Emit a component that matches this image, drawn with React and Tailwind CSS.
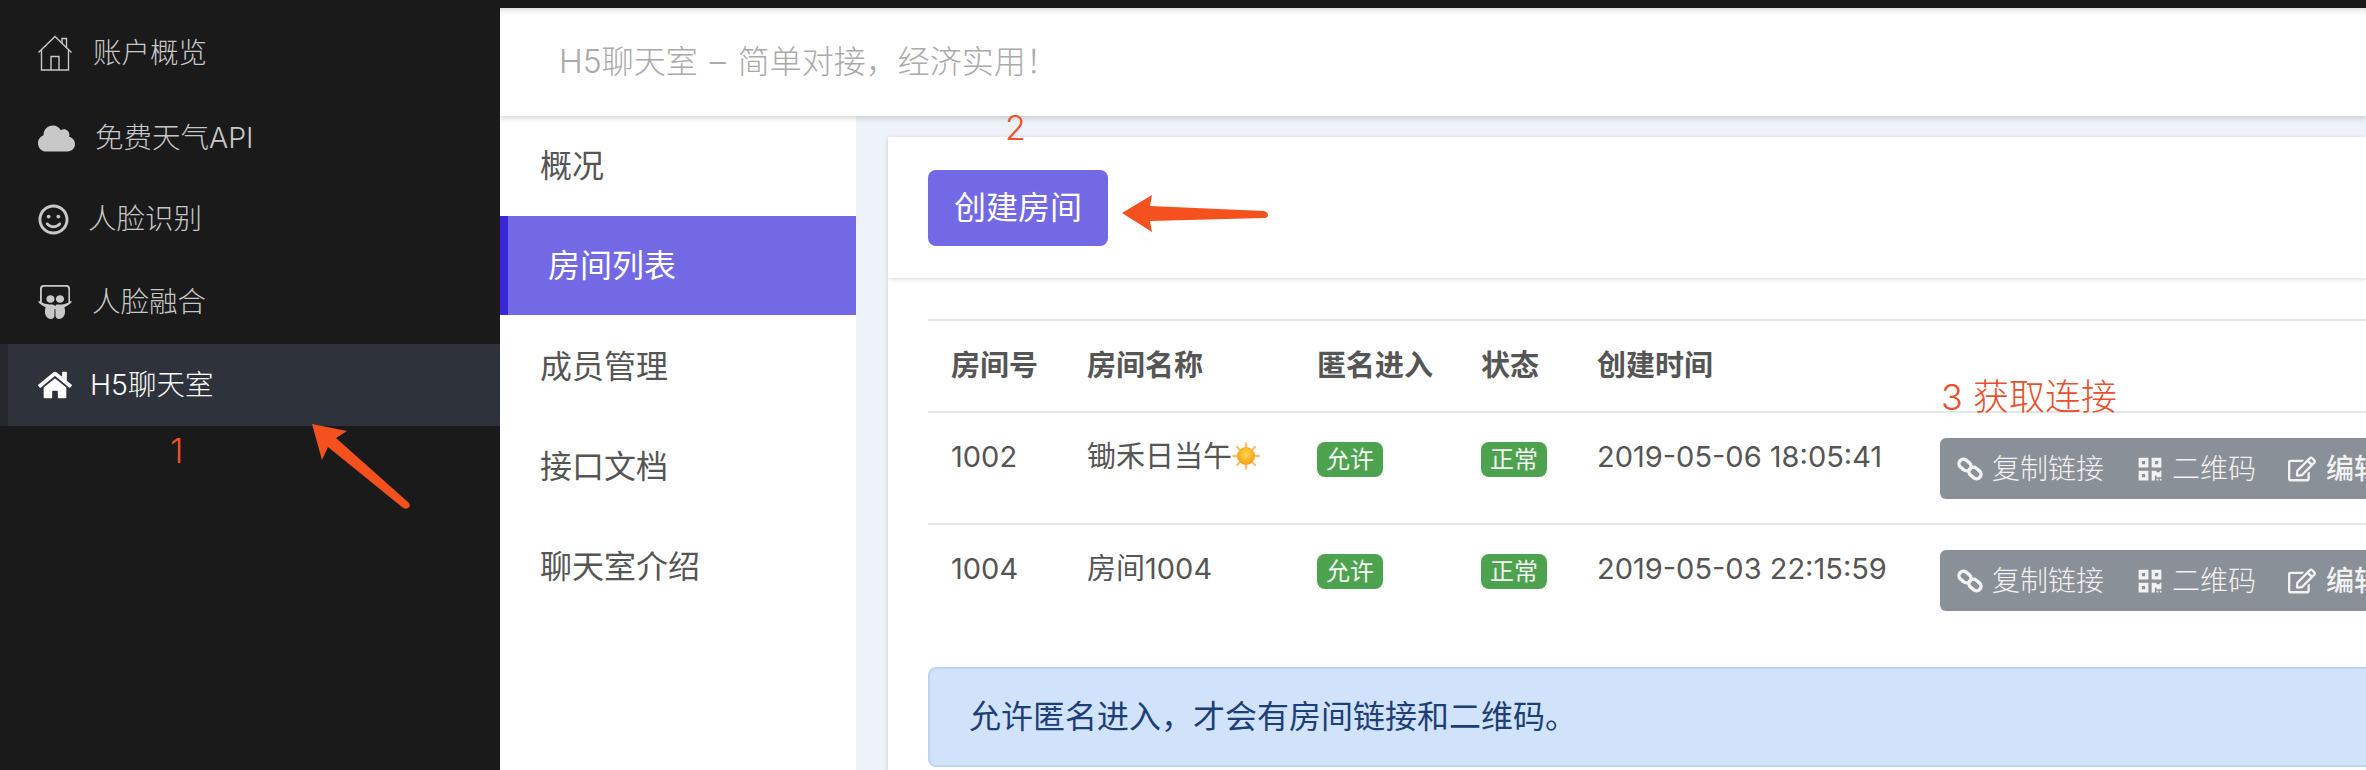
import { FaCloud, FaRegSmile, FaSlideshare, FaHome, FaQrcode, FaRegEdit } from "react-icons/fa";

const fontStack = "font-['Inter','Noto_Sans_CJK_SC',sans-serif]";

function OutlineHouse() {
  return (
    <svg width="34" height="36" viewBox="0 0 34 36" fill="none" stroke="#c8c8c8" strokeWidth="1.4">
      <path d="M0.5 17.5 L17 1.5 L33.5 17.5" />
      <path d="M24 8.5 V3.5 H28.5 V13" />
      <path d="M3.5 15 V35 H30.5 V15" />
      <path d="M13 35 V21.5 H21 V35" />
    </svg>
  );
}

function LinkIcon() {
  return (
    <svg width="26" height="26" viewBox="0 0 26 26" fill="none" stroke="#f2f2f2" strokeWidth="3.4">
      <rect x="1.5" y="4.5" width="13" height="9" rx="4.5" transform="rotate(40 8 9)" />
      <rect x="11.5" y="12.5" width="13" height="9" rx="4.5" transform="rotate(40 18 17)" />
    </svg>
  );
}

function Sun() {
  return (
    <svg width="28" height="28" viewBox="0 0 28 28" className="inline-block align-[-3px]">
      <defs>
        <radialGradient id="sunCore" cx="50%" cy="40%" r="60%">
          <stop offset="0%" stopColor="#ffd84a" />
          <stop offset="100%" stopColor="#f59a12" />
        </radialGradient>
      </defs>
      <g stroke="#f3c07a" strokeWidth="2.4" strokeLinecap="round">
        <path d="M14 1.5V4.5M14 23.5V26.5M1.5 14H4.5M23.5 14H26.5M5 5L7 7M21 21L23 23M5 23L7 21M21 7L23 5" />
      </g>
      <circle cx="14" cy="14" r="9" fill="url(#sunCore)" />
    </svg>
  );
}

function Badge({ children }) {
  return (
    <span className="flex h-[35px] w-[66px] items-center justify-center rounded-lg bg-[#4da24f] text-[24px] leading-none text-[#f4f8f4]">
      {children}
    </span>
  );
}

function ActionBar() {
  return (
    <div className="flex h-[61px] w-[520px] items-center rounded-md bg-[#8a9098] pl-[17px] text-[28px] font-light text-[#f2f2f2]">
      <LinkIcon />
      <span className="ml-[9px]">复制链接</span>
      <FaQrcode className="ml-[33px] text-[26px]" />
      <span className="ml-[9px]">二维码</span>
      <FaRegEdit className="ml-[32px] text-[28px]" />
      <span className="ml-[10px] font-medium">编辑</span>
    </div>
  );
}

const sideItems = [
  { label: "账户概览", icon: <OutlineHouse />, box: "w-[55px]", height: "h-[90px]" },
  { label: "免费天气API", icon: <FaCloud className="text-[37px] text-[#c8c8c8]" />, box: "w-[57px]", height: "h-[81px]" },
  { label: "人脸识别", icon: <FaRegSmile className="text-[31px] text-[#c8c8c8]" />, box: "w-[50px]", height: "h-[81px]" },
  { label: "人脸融合", icon: <FaSlideshare className="text-[34px] text-[#c8c8c8]" />, box: "w-[54px]", height: "h-[84px]" },
];

const subNav = ["概况", "房间列表", "成员管理", "接口文档", "聊天室介绍"];

const rooms = [
  { id: "1002", name: <>锄禾日当午<Sun /></>, time: "2019-05-06 18:05:41" },
  { id: "1004", name: "房间1004", time: "2019-05-03 22:15:59" },
];

export default function App() {
  return (
    <div className={`relative flex h-[770px] w-[2366px] flex-col overflow-hidden bg-[#edf3f8] ${fontStack}`}>
      <div className="relative z-20 h-2 shrink-0 bg-[#1a1a1a]" />
      <div className="flex min-h-0 flex-1">
        {/* left dark menu */}
        <div className="relative z-30 flex w-[500px] shrink-0 flex-col bg-[#1a1a1a] text-[28.5px] font-light text-[#c8c8c8]">
          {sideItems.map((item) => (
            <div key={item.label} className={`flex items-center pl-[38px] ${item.height}`}>
              <div className={`flex items-center ${item.box}`}>{item.icon}</div>
              <span>{item.label}</span>
            </div>
          ))}
          <div className="flex h-[82px] items-center border-l-8 border-[#24272c] bg-[#2e323a] pl-[30px] text-white">
            <div className="flex w-[52px] items-center">
              <FaHome className="text-[34px]" />
            </div>
            <span>H5聊天室</span>
          </div>
        </div>

        <div className="flex min-w-0 flex-1 flex-col">
          <div className="relative z-10 flex h-[108px] shrink-0 items-center bg-white pl-[59px] text-[32px] font-light text-[#aaaaaa] [word-spacing:3px] shadow-[0_2px_6px_rgba(0,0,0,0.18),inset_0_6px_6px_-4px_rgba(0,0,0,0.16)]">
            H5聊天室 – 简单对接，经济实用！
          </div>

          <div className="flex min-h-0 flex-1">
            <div className="w-[356px] shrink-0 bg-white text-[32px] text-[#555555]">
              {subNav.map((name, i) =>
                name === "房间列表" ? (
                  <div key={name} className="flex h-[99px] items-center border-l-8 border-[#3a25d8] bg-[#7469e4] pl-[40px] text-white">
                    {name}
                  </div>
                ) : (
                  <div key={name} className={`flex h-[100px] items-center pl-[40px] ${i > 1 ? "pt-[3px]" : ""}`}>
                    {name}
                  </div>
                ),
              )}
            </div>

            <div className="min-w-0 flex-1 overflow-hidden pl-8 pt-[21px]">
              <div className="relative z-[1] h-[141px] bg-white pl-10 pt-[33px] shadow-[0_1px_5px_rgba(0,0,0,0.16)]">
                <button className="h-[76px] w-[180px] rounded-lg bg-[#7469e4] text-[32px] text-white">创建房间</button>
              </div>

              <div className="bg-white pl-10 pt-[41px] pb-10 shadow-[0_1px_5px_rgba(0,0,0,0.16)]">
                <table className="w-[1600px] table-fixed border-collapse text-left text-[29px] text-[#555555]">
                  <thead>
                    <tr className="h-[92px] border-y-2 border-[#e4e6e8]">
                      <th className="w-[159px] pl-[23px] font-semibold">房间号</th>
                      <th className="w-[230px] font-semibold">房间名称</th>
                      <th className="w-[164px] font-semibold">匿名进入</th>
                      <th className="w-[116px] font-semibold">状态</th>
                      <th className="w-[343px] font-semibold">创建时间</th>
                      <th />
                    </tr>
                  </thead>
                  <tbody>
                    {rooms.map((room, i) => (
                      <tr key={room.id} className={`h-[112px] align-top ${i === 0 ? "border-b-2 border-[#e4e6e8]" : ""}`}>
                        <td className="pl-[23px] pt-[22px]">{room.id}</td>
                        <td className="pt-[22px] whitespace-nowrap">{room.name}</td>
                        <td className="pt-[29px]"><Badge>允许</Badge></td>
                        <td className="pt-[29px]"><Badge>正常</Badge></td>
                        <td className="pt-[22px] whitespace-nowrap">{room.time}</td>
                        <td className="pt-[25px]"><ActionBar /></td>
                      </tr>
                    ))}
                  </tbody>
                </table>

                <div className="mt-[31px] flex h-[100px] w-[1600px] items-center rounded-lg border-2 border-[#bcd5f5] bg-[#d1e3fa] pl-[39px] text-[32px] text-[#1d3f76]">
                  允许匿名进入，才会有房间链接和二维码。
                </div>
              </div>
            </div>
          </div>
        </div>
      </div>

      {/* red annotations on top of the shot */}
      <span className="absolute left-[170px] top-[430px] z-40 text-[34px] font-light leading-[42px] text-[#f0502a]">1</span>
      <svg className="absolute left-[305px] top-[418px] z-40" width="110" height="96" viewBox="305 418 110 96">
        <path d="M312 424 L347 431 L336 438 L409 503 Q411 506 408 508 Q405 510 402 507 L328 447 L322 460 Z" fill="#f4511e" />
      </svg>
      <span className="absolute left-[1005px] top-[107px] z-40 text-[34px] font-light leading-[42px] text-[#f0502a]">2</span>
      <svg className="absolute left-[1118px] top-[190px] z-40" width="154" height="46" viewBox="1118 190 154 46">
        <path d="M1122 213 L1152 195 L1150 206 L1264 211 Q1268 212 1268 215 Q1268 218 1264 218 L1150 221 L1152 232 Z" fill="#f4511e" />
      </svg>
      <span className="absolute left-[1941px] top-[374px] z-40 text-[36px] font-light leading-[46px] text-[#e8502c]">3 获取连接</span>
    </div>
  );
}
